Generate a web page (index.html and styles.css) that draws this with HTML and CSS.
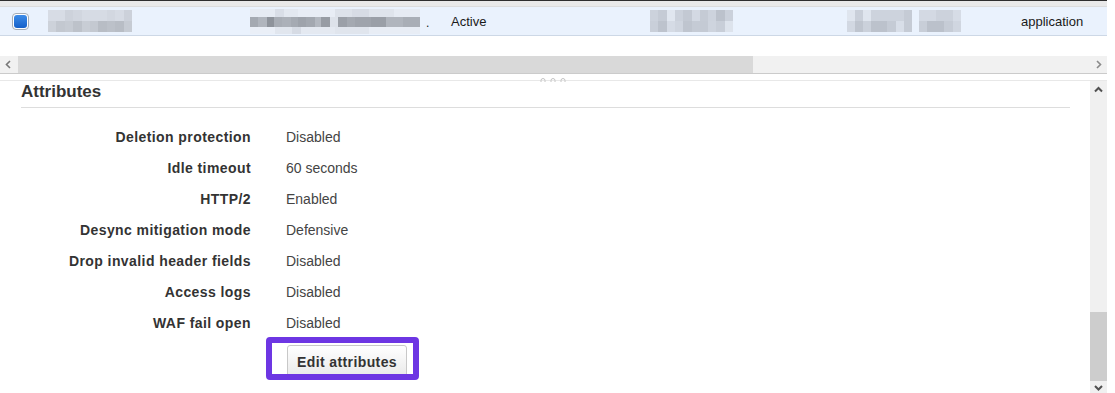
FILE: index.html
```html
<!DOCTYPE html>
<html lang="en">
<head>
  <meta charset="UTF-8" />
  <title>Load balancer attributes</title>
  <link rel="stylesheet" href="styles.css">
</head>
<body>

<div class="frame">
  <!-- selected row of the list table -->
  <div class="table-top"></div>
  <div class="table-row">
    <div class="cell cell-check">
      <span class="checkbox"><span class="checkbox-fill"></span></span>
    </div>
    <div class="cell cell-name">
      <div class="mosaic mosaic-a">
        <div class="m-row a1"></div>
        <div class="m-row a2"></div>
      </div>
    </div>
    <div class="cell cell-dns">
      <div class="mosaic mosaic-b">
        <div class="m-row b1"></div>
        <div class="m-row b2"></div>
        <div class="m-row b3"></div>
      </div>
      <span class="dot">.</span>
    </div>
    <div class="cell cell-state">Active</div>
    <div class="cell cell-vpc">
      <div class="mosaic mosaic-c">
        <div class="m-row c1"></div>
        <div class="m-row c2"></div>
      </div>
    </div>
    <div class="cell cell-zones">
      <div class="mosaic mosaic-d">
        <div class="m-row d1"></div>
        <div class="m-row d2"></div>
      </div>
      <div class="mosaic mosaic-e">
        <div class="m-row e1"></div>
        <div class="m-row e2"></div>
      </div>
    </div>
    <div class="cell cell-type">application</div>
  </div>

  <div class="table-gap"></div>

  <div class="hscroll">
    <div class="arrow-btn">
      <svg width="17" height="17" viewBox="0 0 17 17"><polyline points="10,5 6.5,8.5 10,12" fill="none" stroke="#777" stroke-width="1.6"/></svg>
    </div>
    <div class="hscroll-track">
      <div class="hscroll-thumb"></div>
    </div>
    <div class="arrow-btn">
      <svg width="17" height="17" viewBox="0 0 17 17"><polyline points="7,5 10.5,8.5 7,12" fill="none" stroke="#8a8a8a" stroke-width="1.6"/></svg>
    </div>
  </div>

  <div class="splitter">
    <svg class="grip" width="28" height="4" viewBox="0 0 28 4">
      <path d="M1 4 V2.5 A2 2 0 0 1 5 2.5 V4" fill="none" stroke="#c4c4c4" stroke-width="1"/>
      <path d="M11 4 V2.5 A2 2 0 0 1 15 2.5 V4" fill="none" stroke="#c4c4c4" stroke-width="1"/>
      <path d="M21 4 V2.5 A2 2 0 0 1 25 2.5 V4" fill="none" stroke="#c4c4c4" stroke-width="1"/>
    </svg>
  </div>

  <!-- details panel -->
  <div class="panel">
    <div class="panel-content">
      <h3 class="section-title">Attributes</h3>

      <div class="attr-list">
        <div class="attr-label">Deletion protection</div>
        <div class="attr-value">Disabled</div>

        <div class="attr-label">Idle timeout</div>
        <div class="attr-value">60 seconds</div>

        <div class="attr-label">HTTP/2</div>
        <div class="attr-value">Enabled</div>

        <div class="attr-label">Desync mitigation mode</div>
        <div class="attr-value">Defensive</div>

        <div class="attr-label">Drop invalid header fields</div>
        <div class="attr-value">Disabled</div>

        <div class="attr-label">Access logs</div>
        <div class="attr-value">Disabled</div>

        <div class="attr-label">WAF fail open</div>
        <div class="attr-value">Disabled</div>

        <div class="attr-label"></div>
        <div class="attr-action">
          <span class="edit-wrap">
            <button class="edit-btn">Edit attributes</button>
            <span class="highlight"></span>
          </span>
        </div>
      </div>
    </div>

    <div class="vscroll">
      <div class="arrow-btn">
        <svg width="17" height="17" viewBox="0 0 17 17"><polyline points="5,10.5 8.5,7 12,10.5" fill="none" stroke="#505050" stroke-width="2"/></svg>
      </div>
      <div class="vscroll-track">
        <div class="vscroll-thumb"></div>
      </div>
      <div class="arrow-btn arrow-cut">
        <svg width="17" height="12" viewBox="0 0 17 12"><polyline points="5,5 8.5,8.5 12,5" fill="none" stroke="#505050" stroke-width="2"/></svg>
      </div>
    </div>
  </div>
</div>

</body>
</html>
```

FILE: styles.css
```css
* {
  box-sizing: border-box;
}

body {
  margin: 0;
  height: 393px;
  overflow: hidden;
  background: #fff;
  font-family: 'Liberation Sans', Arial, sans-serif;
  color: #333;
}

.frame {
  width: 1107px;
}

/* list table */
.table-top {
  height: 7px;
  border-top: 1px solid #2e2e2e;
  background: #e9e9e9;
  border-bottom: 1px solid #dcdcdc;
}

.table-row {
  display: flex;
  align-items: center;
  height: 29px;
  background: #eaf2fd;
  border-bottom: 1px solid #cdd8e6;
  font-size: 13px;
  color: #1a1a1a;
}

.cell {
  display: flex;
  align-items: center;
  flex-shrink: 0;
}

.cell-check { width: 48px; padding-left: 12px; }
.cell-name  { width: 202px; }
.cell-dns   { width: 201px; }
.cell-state { width: 199px; }
.cell-vpc   { width: 197px; }
.cell-zones { width: 174px; gap: 7px; }
.cell-type  { flex: 1; }

.dot {
  margin-left: 6px;
  margin-top: 4px;
  font-size: 12px;
}

.checkbox {
  display: block;
  width: 17px;
  height: 17px;
  padding: 1px;
  border: 1px solid #a4acb6;
  border-radius: 4px;
  background: #fff;
}

.checkbox-fill {
  display: block;
  width: 100%;
  height: 100%;
  border-radius: 3px;
  background: linear-gradient(#3d8ce8, #1560c9);
}

/* pixelated (blurred) values */
.mosaic {
  display: flex;
  flex-direction: column;
}

.mosaic-a { width: 84px; }
.mosaic-b { width: 170px; }
.mosaic-c { width: 83px; }
.mosaic-d { width: 65px; }
.mosaic-e { width: 42px; }

.m-row { height: 11px; }

.a1 { background: linear-gradient(to right, #d7dce5 0 20%, #cdd2db 20% 30%, #d1d6df 30% 40%, #d6dbe4 40% 70%, #d2d7e0 70% 80%, #d6dbe4 80% 90%, #ccd1da 90%); }
.a2 { background: linear-gradient(to right, #cdd2da 0 10%, #c3c8d0 10% 20%, #c6cbd3 20% 30%, #bdc2ca 30% 40%, #c8cdd5 40% 50%, #c4c9d1 50% 60%, #b8bdc5 60% 70%, #bcc1c9 70% 80%, #b8bdc5 80% 90%, #c6cbd3 90%); }

.b1, .b3 { height: 8px; }
.b1 { background: linear-gradient(to right, #e6ebf3 0 15%, #d9dee7 15% 20%, #e3e8f0 20% 28%, #e8edf5 28% 50%, #dde2ea 50% 60%, #d7dce5 60% 70%, #dfe4ec 70% 85%, #e6ebf3 85%); }
.b2 { height: 10px; background: linear-gradient(to right, #a4a9b1 0 5%, #b0b5bd 5% 10%, #8e939b 10% 14%, #a8adb5 14% 19%, #acb1b9 19% 24%, #a5aab2 24% 28%, #9ea3ab 28% 33%, #a3a8b0 33% 38%, #b3b8c0 38% 42%, #979ca4 42% 47%, #dde2ea 47% 52%, #9ba0a8 52% 57%, #a4a9b1 57% 62%, #9fa4ac 62% 71%, #9a9fa7 71% 80%, #b0b5bd 80% 90%, #a9aeb6 90%); }
.b3 { height: 7px; background: linear-gradient(to right, #eaeff7 0 15%, #e1e6ee 15% 25%, #d6dbe4 25% 30%, #e4e9f1 30% 50%, #e0e5ed 50% 70%, #e8edf5 70%); }

.c1 { background: linear-gradient(to right, #ccd2dc 0 10%, #c5cbd5 10% 20%, #e0e6ef 20% 30%, #cbd1db 30% 40%, #c3c9d3 40% 50%, #d3d9e3 50% 60%, #c5cbd5 60% 70%, #cdd3dd 70% 80%, #bcc2cc 80% 90%, #cbd1db 90%); }
.c2 { background: linear-gradient(to right, #c9cfd9 0 10%, #bdc3cd 10% 20%, #d5dbe5 20% 30%, #cfd5df 30% 40%, #bfc5cf 40% 50%, #c5cbd5 50% 60%, #c4cad4 60% 70%, #ced4de 70% 80%, #c8ced8 80% 90%, #dde3ec 90%); }

.d1 { background: linear-gradient(to right, #dfe5ee 0 12%, #c9cfd9 12% 25%, #dfe5ee 25% 37%, #cdd3dd 37% 87%, #c5cbd5 87%); }
.d2 { background: linear-gradient(to right, #d2d8e2 0 12%, #bfc5cf 12% 25%, #cbd1db 25% 37%, #bcc2cc 37% 62%, #c5cbd5 62% 75%, #d8dee8 75% 87%, #c5cbd5 87%); }
.e1 { background: linear-gradient(to right, #d3d9e3 0 40%, #ccd2dc 40% 80%, #d6dce6 80%); }
.e2 { background: linear-gradient(to right, #c8ced8 0 20%, #bbc1cb 20% 60%, #c6ccd6 60% 80%, #d0d6e0 80%); }

.table-gap {
  height: 20px;
}

/* horizontal scrollbar */
.hscroll {
  display: flex;
  height: 18px;
  background: #f1f1f1;
  border-bottom: 1px solid #cbcbcb;
}

.arrow-btn {
  width: 17px;
  height: 17px;
  flex-shrink: 0;
  display: flex;
}

.hscroll-track {
  flex: 1;
  display: flex;
  padding-left: 1px;
}

.hscroll-thumb {
  width: 735px;
  background: #d9d9d9;
}

/* splitter between list and details */
.splitter {
  position: relative;
  height: 6px;
}

.grip {
  position: absolute;
  left: 540px;
  top: 4px;
  z-index: 1;
}

/* details panel */
.panel {
  display: flex;
  height: 313px;
  border-top: 1px solid #e8e8e8;
}

.panel-content {
  flex: 1;
  padding: 0 20px 0 21px;
}

.section-title {
  margin: 0;
  padding-top: 1px;
  font-size: 17px;
  line-height: 20px;
  font-weight: bold;
  color: #333;
  padding-bottom: 5px;
  border-bottom: 1px solid #dddddd;
}

.attr-list {
  display: grid;
  grid-template-columns: 230px 1fr;
  column-gap: 35px;
  margin-top: 14px;
  font-size: 14px;
  line-height: 31px;
}

.attr-label {
  text-align: right;
  font-weight: bold;
  letter-spacing: 0.42px;
  color: #333;
}

.attr-value {
  color: #444;
}

.attr-action {
  padding-top: 6px;
  padding-left: 1px;
}

.edit-wrap {
  position: relative;
  display: inline-block;
}

.edit-btn {
  display: block;
  width: 120px;
  height: 34px;
  padding: 0;
  font-family: 'Liberation Sans', Arial, sans-serif;
  font-size: 14px;
  font-weight: bold;
  letter-spacing: 0.4px;
  color: #333;
  background: linear-gradient(#ffffff, #e8e8e8);
  border: 1px solid #c8c8c8;
  border-radius: 3px;
}

.highlight {
  position: absolute;
  left: -21px;
  top: -8px;
  width: 153px;
  height: 43px;
  border: 6px solid #6d36e3;
  border-radius: 4px;
}

/* vertical scrollbar */
.vscroll {
  width: 17px;
  display: flex;
  flex-direction: column;
  background: #f0f0f0;
}

.vscroll-track {
  flex: 1;
  display: flex;
  flex-direction: column;
  justify-content: flex-end;
}

.vscroll-thumb {
  height: 69px;
  background: #cdcdcd;
}

.arrow-cut {
  height: 12px;
}
```
